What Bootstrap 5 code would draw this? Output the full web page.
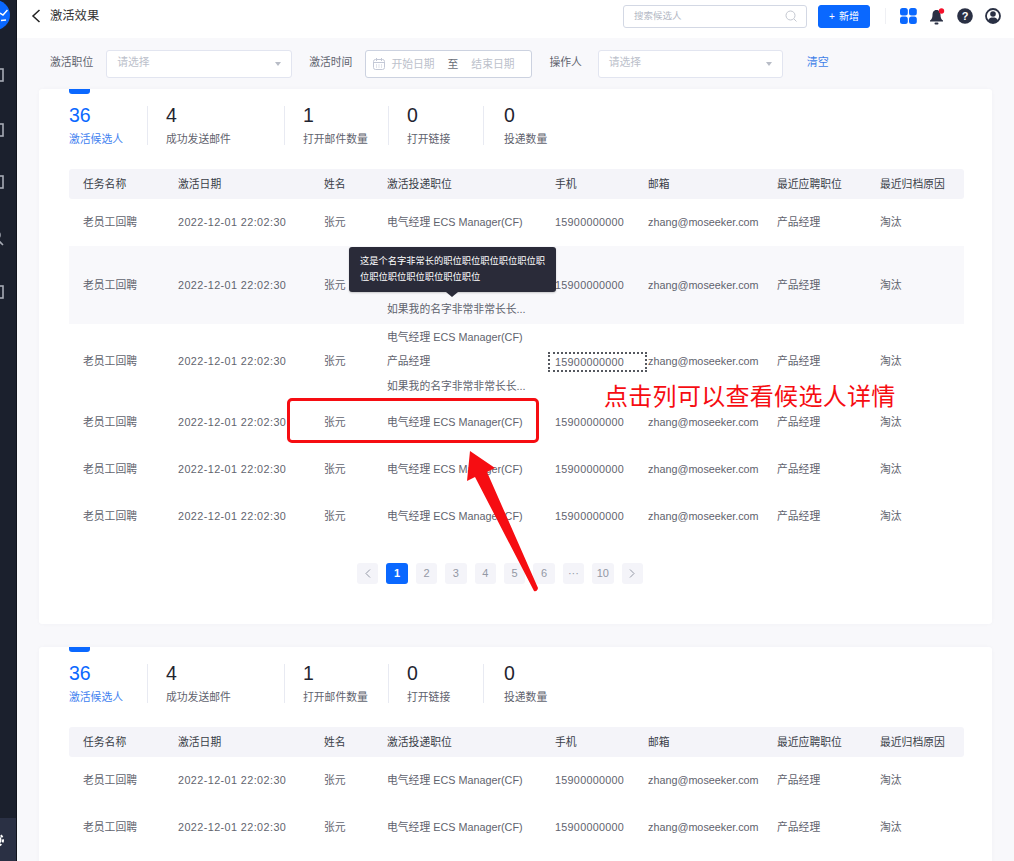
<!DOCTYPE html>
<html lang="zh">
<head>
<meta charset="utf-8">
<title>激活效果</title>
<link href="https://cdn.jsdelivr.net/npm/bootstrap@5.3.0/dist/css/bootstrap.min.css" rel="stylesheet">
<style>
html,body{height:861px;overflow:hidden}
body{font-family:"Liberation Sans","Noto Sans CJK SC",sans-serif;font-size:11px;color:#5f636e;background:#f8f8fb}
.stage{height:861px;overflow:hidden}
.sidebar{width:17px;flex:none;background:#1b202d;border-right:1px solid #11141d;overflow:hidden}
.logo-dot{width:30px;height:30px;border-radius:50%;background:#0a68ff;margin:0 0 0 -20px;flex:none;padding-right:2px}
.side-ico{display:block;margin-left:-11px;flex:none}
.si-1{margin-top:38px}.si-2{margin-top:41px}.si-3{margin-top:38px}.si-4{margin-top:41px}.si-5{margin-top:39px}
.side-foot{background:#2a3044;height:43px;margin-top:auto;padding-top:14px}
.main-col{min-width:0}
.topbar{height:38px;background:#fff;flex:none;padding-left:14px}
.tb-back{margin-top:-6px}
.page-title{font-size:12.3px;color:#333;margin-left:9px;margin-top:-6px}
.searchbox{width:184px;height:23px;border:1px solid #d3d8e4;border-radius:3px;margin-left:auto;padding:0 9px 0 10px;color:#b4b9c5;font-size:9.5px;margin-top:-6px}
.add-btn{--bs-btn-bg:#0a68ff;--bs-btn-border-color:#0a68ff;--bs-btn-color:#fff;--bs-btn-hover-bg:#0a68ff;--bs-btn-font-size:10px;--bs-btn-padding-x:0;--bs-btn-padding-y:0;--bs-btn-border-radius:3px;width:52px;height:23px;margin:-6px 0 0 11px}
.top-sep{width:1px;height:16px;background:#eff0f4;margin:-6px 14px 0 15px}
.top-icons{gap:12px;margin:-6px 13px 0 0}
.filterbar{height:51px;flex:none;padding:12px 0 0 33px}
.flabel{font-size:10.8px;line-height:24px;color:#5f636e}
.fbox{height:28px;background:#fff;border:1px solid #e2e5f0;border-radius:3px;color:#bcc1cb;padding:0 10px;font-size:10.8px}
.fbox-a{width:186px;margin-left:13px}
.fbox-b{width:167px;margin-left:13px;border-color:#ccd2e0;padding:0 7px}
.fbox-c{width:185px;margin-left:16px}
.flabel-2{margin-left:17px}
.fclear{color:#3f7fe8;margin-left:24px;line-height:24px}
.fph{margin-top:-4px}
.ms-date{margin-left:6px}
.fto{margin:0 13px;color:#6a6e78}
.caret-d{width:0;height:0;border-left:3.5px solid transparent;border-right:3.5px solid transparent;border-top:4px solid #b8bcc6;margin-left:auto;margin-top:-1px}
.panel{background:#fff;margin:0 22px 23px;border-radius:3px;padding:0 28px 0 30px;box-shadow:0 0 4px rgba(40,50,90,.03);flex:none}
.panel-a{height:535px}
.panel-b{height:300px}
.tabmark{width:21px;height:5px;background:#0a68ff;border-radius:0 0 3px 3px}
.stats{padding-top:12px;height:75px}
.stat{height:39px;border-right:1px solid #e8eaf2;padding-left:18px;flex:none}
.stat:first-child{padding-left:0;width:79px}
.stat:nth-child(2){width:137px}
.stat:nth-child(3){width:104px}
.stat:nth-child(4){width:95px}
.stat:last-child{border-right:0;padding-left:20px}
.stat-num{font-size:19.5px;line-height:20px;margin-top:-1px;color:#1f2430}
.stat-lbl{font-size:10.8px;line-height:16px;margin-top:6px;white-space:nowrap}
.stat-on .stat-num{color:#0a68ff}
.stat-on .stat-lbl{color:#3f82f0}
.grid-t{table-layout:fixed;width:895px;margin:0;--bs-table-bg:transparent;--bs-table-color:#5f636e;--bs-table-border-color:transparent;font-size:10.8px}
.grid-t th,.grid-t td{padding:0 0 0 14px;border:0;vertical-align:middle;white-space:nowrap;font-weight:400;overflow:visible}
.grid-t thead th{height:30px;background:#f4f4f9;color:#3a3e48}
.grid-t thead th:first-child{border-radius:3px 0 0 3px}
.grid-t thead th:last-child{border-radius:0 3px 3px 0}
.grid-t td{height:47px}
.grid-t tr.tall-a td{height:78px;background:#f8f8fb}
.grid-t tr.tall-b td{height:75px}
.c1{width:95px}.c2{width:146px}.c3{width:63px}.c4{width:168px}.c5{width:93px}.c6{width:129px}.c7{width:103px}.c8{width:98px}
.multi{line-height:24.5px}
.dnum{letter-spacing:.42px}
.pnum{letter-spacing:.28px}
.focus-box{display:block;width:99px;height:20px;line-height:16px;margin-left:-7px;padding-left:5px;border:2px dotted #55585f}
.pager{gap:8px;margin:23px 0 0 288px}
.pager .page-item .page-link{width:21.4px;height:21px;padding:0;line-height:21px;text-align:center;font-size:11px;background:#f4f4f9;border:0;border-radius:3px;color:#9398a5;margin:0!important;display:flex;align-items:center;justify-content:center}
.pager .active .page-link{background:#0a68ff!important;color:#fff!important;font-weight:700}
.tipbox{position:absolute;left:349px;top:247px;width:207px;height:45px;background:#2a2b39;color:#fff;border-radius:3px;font-size:9.25px;line-height:16px;padding:6px 11px;box-shadow:0 1px 2px rgba(0,0,0,.2);white-space:nowrap}
.tipbox::after{content:"";position:absolute;left:97px;bottom:-5px;border-left:6px solid transparent;border-right:6px solid transparent;border-top:5px solid #2a2b39}
.redbox{position:absolute;left:287px;top:398px;width:252px;height:45px;border:3px solid #f60d12;border-radius:5px}
.redtext{position:absolute;left:604px;top:380px;font-size:24px;line-height:34px;color:#f60d12;letter-spacing:.3px;white-space:nowrap}
.redarrow{position:absolute;left:0;top:0}
</style>
</head>
<body>
<div class="stage d-flex position-relative">
  <aside class="sidebar d-flex flex-column">
    <div class="logo-dot d-flex align-items-center justify-content-end">
      <svg width="8" height="13" viewBox="0 0 8 13"><path d="M0 4l3 2 4.500-5M1 11.500l5-.5" fill="none" stroke="#fff" stroke-width="1.500"/></svg>
    </div>
    <svg class="side-ico si-1" width="16" height="14" viewBox="0 0 16 14"><rect x="2" y="1" width="12" height="12" fill="none" stroke="#a7abb5" stroke-width="1.600"/></svg>
    <svg class="side-ico si-2" width="16" height="14" viewBox="0 0 16 14"><rect x="2" y="1" width="12" height="12" fill="none" stroke="#a7abb5" stroke-width="1.600"/></svg>
    <svg class="side-ico si-3" width="16" height="14" viewBox="0 0 16 14"><rect x="2" y="1" width="12" height="12" fill="none" stroke="#a7abb5" stroke-width="1.600"/></svg>
    <svg class="side-ico si-4" width="16" height="16" viewBox="0 0 16 16"><circle cx="7" cy="5" r="4" fill="none" stroke="#a7abb5" stroke-width="1.600"/><path d="M8 9l6 6" stroke="#a7abb5" stroke-width="1.600"/></svg>
    <svg class="side-ico si-5" width="16" height="14" viewBox="0 0 16 14"><rect x="2" y="1" width="12" height="12" fill="none" stroke="#a7abb5" stroke-width="1.600"/></svg>
    <div class="side-foot">
      <svg class="side-ico" width="16" height="16" viewBox="0 0 16 16"><circle cx="8" cy="8" r="4.500" fill="#fff"/><circle cx="8" cy="8" r="6" fill="none" stroke="#fff" stroke-width="2" stroke-dasharray="2.500 2"/></svg>
    </div>
  </aside>
  <div class="main-col flex-grow-1 d-flex flex-column">
    <header class="topbar d-flex align-items-center">
      <svg class="tb-back" width="10" height="14" viewBox="0 0 10 14"><path d="M8.500 1L2 7l6.500 6" fill="none" stroke="#222" stroke-width="1.500"/></svg>
      <span class="page-title">激活效果</span>
      <div class="searchbox d-flex align-items-center justify-content-between">
        <span>搜索候选人</span>
        <svg width="12" height="12" viewBox="0 0 12 12"><circle cx="5.500" cy="5.500" r="4.500" fill="none" stroke="#c3c7d0"/><path d="M9 9l2.500 2.500" stroke="#c3c7d0"/></svg>
      </div>
      <button class="btn add-btn d-flex align-items-center justify-content-center gap-1" type="button"><span>+</span><span>新增</span></button>
      <span class="top-sep"></span>
      <div class="top-icons d-flex align-items-center">
        <svg width="17" height="16" viewBox="0 0 17 16"><rect x="0" y="0" width="7.800" height="7.500" rx="2.500" fill="#0a68ff"/><rect x="9" y="0" width="7.800" height="7.500" rx="2.500" fill="#0a68ff"/><rect x="0" y="8.500" width="7.800" height="7.500" rx="2.500" fill="#0a68ff"/><rect x="9" y="8.500" width="7.800" height="7.500" rx="2.500" fill="#0a68ff"/></svg>
        <svg width="16" height="17" viewBox="0 0 16 17"><path d="M7.500 2C4.500 2 3.500 4.500 3.500 7c0 3-1 4.500-2.500 5.500v1h13v-1C12.500 11.500 11.500 10 11.500 7c0-2.500-1-5-4-5z" fill="#2a3044"/><rect x="5.500" y="14.500" width="4" height="2" rx="1" fill="#2a3044"/><circle cx="12.500" cy="3" r="2.700" fill="#f5102a"/></svg>
        <svg width="16" height="16" viewBox="0 0 16 16"><circle cx="8" cy="8" r="7.800" fill="#2a3044"/><text x="8" y="12" text-anchor="middle" font-size="11" font-weight="700" font-family="Liberation Sans" fill="#fff">?</text></svg>
        <svg width="16" height="16" viewBox="0 0 16 16"><circle cx="8" cy="8" r="7" fill="#fff" stroke="#2a3044" stroke-width="1.800"/><circle cx="8" cy="6" r="2.800" fill="#2a3044"/><path d="M3 12.500c1-2.500 3-3 5-3s4 .5 5 3c-1.500 1.500-3 2.200-5 2.200s-3.500-.7-5-2.200z" fill="#2a3044"/></svg>
      </div>
    </header>
    <div class="filterbar d-flex align-items-start">
      <span class="flabel">激活职位</span>
      <div class="fbox fbox-a d-flex align-items-center"><span class="fph">请选择</span><i class="caret-d"></i></div>
      <span class="flabel flabel-2">激活时间</span>
      <div class="fbox fbox-b d-flex align-items-center">
        <svg width="12" height="12" viewBox="0 0 12 12"><rect x=".5" y="1.500" width="11" height="10" rx="2" fill="none" stroke="#c3c8d6"/><path d="M.5 4.500h11M3.500 0v3M8.500 0v3M3 7h1M5.500 7h1M8 7h1M3 9h1M5.500 9h1M8 9h1" stroke="#c3c8d6"/></svg>
        <span class="ms-date">开始日期</span><span class="fto">至</span><span>结束日期</span>
      </div>
      <span class="flabel flabel-2">操作人</span>
      <div class="fbox fbox-c d-flex align-items-center"><span class="fph">请选择</span><i class="caret-d"></i></div>
      <span class="fclear">清空</span>
    </div>

    <section class="panel panel-a">
      <div class="tabmark"></div>
      <div class="stats d-flex">
        <div class="stat stat-on"><div class="stat-num">36</div><div class="stat-lbl">激活候选人</div></div>
        <div class="stat"><div class="stat-num">4</div><div class="stat-lbl">成功发送邮件</div></div>
        <div class="stat"><div class="stat-num">1</div><div class="stat-lbl">打开邮件数量</div></div>
        <div class="stat"><div class="stat-num">0</div><div class="stat-lbl">打开链接</div></div>
        <div class="stat"><div class="stat-num">0</div><div class="stat-lbl">投递数量</div></div>
      </div>
      <table class="table grid-t">
        <colgroup><col class="c1"><col class="c2"><col class="c3"><col class="c4"><col class="c5"><col class="c6"><col class="c7"><col class="c8"></colgroup>
        <thead><tr><th>任务名称</th><th>激活日期</th><th>姓名</th><th>激活投递职位</th><th>手机</th><th>邮箱</th><th>最近应聘职位</th><th>最近归档原因</th></tr></thead>
        <tbody>
          <tr><td>老员工回聘</td><td class="dnum">2022-12-01 22:02:30</td><td>张元</td><td>电气经理 ECS Manager(CF)</td><td class="pnum">15900000000</td><td>zhang@moseeker.com</td><td>产品经理</td><td>淘汰</td></tr>
          <tr class="tall-a"><td>老员工回聘</td><td class="dnum">2022-12-01 22:02:30</td><td>张元</td><td class="multi">电气经理 ECS Manager(CF)<br>产品经理<br>如果我的名字非常非常长长...</td><td class="pnum">15900000000</td><td>zhang@moseeker.com</td><td>产品经理</td><td>淘汰</td></tr>
          <tr class="tall-b"><td>老员工回聘</td><td class="dnum">2022-12-01 22:02:30</td><td>张元</td><td class="multi">电气经理 ECS Manager(CF)<br>产品经理<br>如果我的名字非常非常长长...</td><td class="pnum"><span class="focus-box">15900000000</span></td><td>zhang@moseeker.com</td><td>产品经理</td><td>淘汰</td></tr>
          <tr><td>老员工回聘</td><td class="dnum">2022-12-01 22:02:30</td><td>张元</td><td>电气经理 ECS Manager(CF)</td><td class="pnum">15900000000</td><td>zhang@moseeker.com</td><td>产品经理</td><td>淘汰</td></tr>
          <tr><td>老员工回聘</td><td class="dnum">2022-12-01 22:02:30</td><td>张元</td><td>电气经理 ECS Manager(CF)</td><td class="pnum">15900000000</td><td>zhang@moseeker.com</td><td>产品经理</td><td>淘汰</td></tr>
          <tr><td>老员工回聘</td><td class="dnum">2022-12-01 22:02:30</td><td>张元</td><td>电气经理 ECS Manager(CF)</td><td class="pnum">15900000000</td><td>zhang@moseeker.com</td><td>产品经理</td><td>淘汰</td></tr>
        </tbody>
      </table>
      <ul class="pagination pager">
        <li class="page-item"><a class="page-link" href="#" aria-label="上一页"><svg width="6" height="9" viewBox="0 0 6 9"><path d="M5 .5L1 4.500l4 4" fill="none" stroke="#9398a5"/></svg></a></li>
        <li class="page-item active"><a class="page-link" href="#">1</a></li>
        <li class="page-item"><a class="page-link" href="#">2</a></li>
        <li class="page-item"><a class="page-link" href="#">3</a></li>
        <li class="page-item"><a class="page-link" href="#">4</a></li>
        <li class="page-item"><a class="page-link" href="#">5</a></li>
        <li class="page-item"><a class="page-link" href="#">6</a></li>
        <li class="page-item"><a class="page-link" href="#">···</a></li>
        <li class="page-item"><a class="page-link" href="#">10</a></li>
        <li class="page-item"><a class="page-link" href="#" aria-label="下一页"><svg width="6" height="9" viewBox="0 0 6 9"><path d="M1 .5l4 4-4 4" fill="none" stroke="#9398a5"/></svg></a></li>
      </ul>
    </section>

    <section class="panel panel-b">
      <div class="tabmark"></div>
      <div class="stats d-flex">
        <div class="stat stat-on"><div class="stat-num">36</div><div class="stat-lbl">激活候选人</div></div>
        <div class="stat"><div class="stat-num">4</div><div class="stat-lbl">成功发送邮件</div></div>
        <div class="stat"><div class="stat-num">1</div><div class="stat-lbl">打开邮件数量</div></div>
        <div class="stat"><div class="stat-num">0</div><div class="stat-lbl">打开链接</div></div>
        <div class="stat"><div class="stat-num">0</div><div class="stat-lbl">投递数量</div></div>
      </div>
      <table class="table grid-t">
        <colgroup><col class="c1"><col class="c2"><col class="c3"><col class="c4"><col class="c5"><col class="c6"><col class="c7"><col class="c8"></colgroup>
        <thead><tr><th>任务名称</th><th>激活日期</th><th>姓名</th><th>激活投递职位</th><th>手机</th><th>邮箱</th><th>最近应聘职位</th><th>最近归档原因</th></tr></thead>
        <tbody>
          <tr><td>老员工回聘</td><td class="dnum">2022-12-01 22:02:30</td><td>张元</td><td>电气经理 ECS Manager(CF)</td><td class="pnum">15900000000</td><td>zhang@moseeker.com</td><td>产品经理</td><td>淘汰</td></tr>
          <tr><td>老员工回聘</td><td class="dnum">2022-12-01 22:02:30</td><td>张元</td><td>电气经理 ECS Manager(CF)</td><td class="pnum">15900000000</td><td>zhang@moseeker.com</td><td>产品经理</td><td>淘汰</td></tr>
        </tbody>
      </table>
    </section>
  </div>

  <div class="tipbox">这是个名字非常长的职位职位职位职位职位职<br>位职位职位职位职位职位职位</div>
  <div class="redbox"></div>
  <div class="redtext">点击列可以查看候选人详情</div>
  <svg class="redarrow" width="1014" height="861" viewBox="0 0 1014 861"><path d="M470 451L495 468 487 472 538 588Q537 592 534 591L475 477 467 481z" fill="#f60d12"/></svg>
</div>
<script src="https://cdn.jsdelivr.net/npm/bootstrap@5.3.0/dist/js/bootstrap.bundle.min.js"></script>
</body>
</html>
